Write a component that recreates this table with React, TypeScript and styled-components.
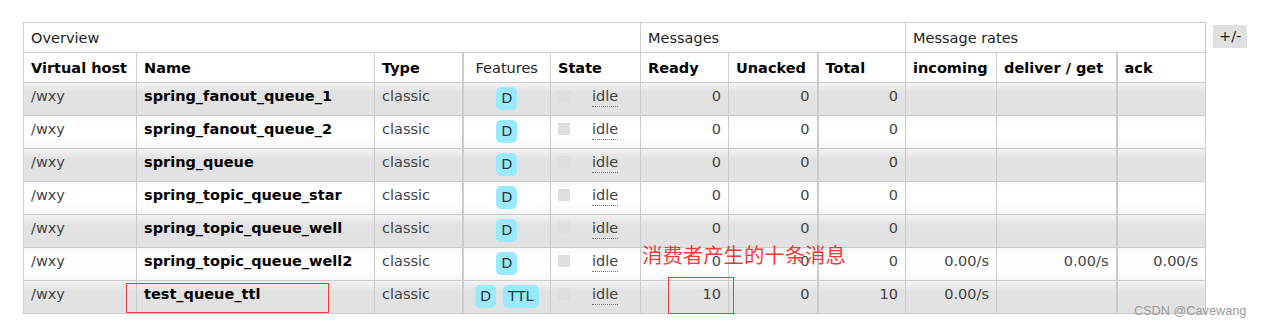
import React from "react";
import styled, { createGlobalStyle, css } from "styled-components";

const Global = createGlobalStyle`
  html, body { margin: 0; padding: 0; background: #fff; }
  body { font-family: "DejaVu Sans", Verdana, sans-serif; }
`;

const Page = styled.div`
  position: relative;
  width: 1263px;
  height: 329px;
  padding: 22px 0 0 23px;
  box-sizing: border-box;
  display: flex;
  align-items: flex-start;
  gap: 7px;
`;

const Table = styled.table`
  border-collapse: collapse;
  table-layout: fixed;
  width: 1183px;
  font-size: 14.5px;
  color: #444;
  border: 1px solid #ccc;
`;

const GroupCell = styled.th`
  height: 29px;
  padding: 0 7px;
  text-align: left;
  font-weight: normal;
  color: #222;
  vertical-align: middle;
  border-bottom: 1px solid #ccc;
  border-left: 1px solid #ccc;
  background: #fff;
`;

const HeadCell = styled.th<{ $normal?: boolean; $thick?: boolean }>`
  height: 29px;
  padding: 0 7px;
  text-align: ${(p) => (p.$normal ? "center" : "left")};
  font-weight: ${(p) => (p.$normal ? "normal" : "bold")};
  color: ${(p) => (p.$normal ? "#222" : "#000")};
  vertical-align: middle;
  white-space: nowrap;
  border-left: ${(p) => (p.$thick ? "2px" : "1px")} solid #ccc;
  border-bottom: 1px solid #ccc;
  background: #fff;
`;

const Row = styled.tr<{ $alt: boolean }>`
  ${(p) =>
    p.$alt
      ? css`
          background: linear-gradient(#f2f2f2 0%, #e2e2e2 30%, #e2e2e2 100%);
        `
      : css`
          background: linear-gradient(#fafafa 0%, #ffffff 35%, #ffffff 65%, #f6f6f6 100%);
        `}
`;

const Cell = styled.td<{ $align?: "left" | "right" | "center"; $thick?: boolean }>`
  height: 29px;
  padding: 3px 7px 0 7px;
  vertical-align: top;
  line-height: 21px;
  text-align: ${(p) => p.$align || "left"};
  white-space: nowrap;
  border-left: ${(p) => (p.$thick ? "2px" : "1px")} solid #ccc;
  border-bottom: 1px solid #ccc;
`;

const QueueName = styled.span`
  font-weight: bold;
  color: #000;
`;

const Badges = styled.span`
  display: inline-flex;
  gap: 7px;
  margin-top: 1px;
`;

const Badge = styled.span`
  display: inline-block;
  background: #99e9ff;
  color: #333;
  border-radius: 5px;
  padding: 0 5px;
  height: 23px;
  line-height: 23px;
`;

const StateWrap = styled.span`
  display: flex;
  align-items: flex-start;
`;

const StateBox = styled.span`
  width: 12px;
  height: 12px;
  margin-top: 4px;
  background: #dedede;
  flex: none;
`;

const Idle = styled.abbr`
  margin-left: 22px;
  text-decoration: none;
  border-bottom: 1px dotted #777;
  line-height: 20px;
  color: #444;
`;

const PlusMinus = styled.span`
  margin-top: 3px;
  background: #e0e0e0;
  color: #222;
  font-size: 14.5px;
  padding: 0 6px;
  height: 23px;
  line-height: 23px;
`;

const Annotation = styled.div`
  position: absolute;
  left: 642px;
  top: 242px;
  font-family: "Noto Sans CJK SC", sans-serif;
  font-size: 20.4px;
  line-height: 24px;
  color: #f03a3a;
`;

const RedBox = styled.div<{ $l: number; $t: number; $w: number; $h: number }>`
  position: absolute;
  left: ${(p) => p.$l}px;
  top: ${(p) => p.$t}px;
  width: ${(p) => p.$w}px;
  height: ${(p) => p.$h}px;
  border: 1px solid #ee3b3b;
  box-sizing: border-box;
  pointer-events: none;
`;

const Watermark = styled.div`
  position: absolute;
  left: 1134px;
  top: 304px;
  font-family: "Liberation Sans", Arial, sans-serif;
  font-size: 12.7px;
  color: #9a9a9a;
`;

type Q = {
  name: string;
  features: string[];
  ready: number;
  unacked: number;
  total: number;
  rates?: [string, string, string];
  incomingOnly?: string;
};

const queues: Q[] = [
  { name: "spring_fanout_queue_1", features: ["D"], ready: 0, unacked: 0, total: 0 },
  { name: "spring_fanout_queue_2", features: ["D"], ready: 0, unacked: 0, total: 0 },
  { name: "spring_queue", features: ["D"], ready: 0, unacked: 0, total: 0 },
  { name: "spring_topic_queue_star", features: ["D"], ready: 0, unacked: 0, total: 0 },
  { name: "spring_topic_queue_well", features: ["D"], ready: 0, unacked: 0, total: 0 },
  {
    name: "spring_topic_queue_well2",
    features: ["D"],
    ready: 0,
    unacked: 0,
    total: 0,
    rates: ["0.00/s", "0.00/s", "0.00/s"],
  },
  { name: "test_queue_ttl", features: ["D", "TTL"], ready: 10, unacked: 0, total: 10, incomingOnly: "0.00/s" },
];

const widths = [113, 238, 88, 88, 90, 88, 89, 88, 91, 120, 89];

export default function App() {
  return (
    <>
      <Global />
      <Page>
        <Table>
          <colgroup>
            {widths.map((w, i) => (
              <col key={i} style={{ width: w }} />
            ))}
          </colgroup>
          <thead>
            <tr>
              <GroupCell colSpan={5}>Overview</GroupCell>
              <GroupCell colSpan={3}>Messages</GroupCell>
              <GroupCell colSpan={3}>Message rates</GroupCell>
            </tr>
            <tr>
              <HeadCell>Virtual host</HeadCell>
              <HeadCell>Name</HeadCell>
              <HeadCell>Type</HeadCell>
              <HeadCell $normal $thick>Features</HeadCell>
              <HeadCell>State</HeadCell>
              <HeadCell>Ready</HeadCell>
              <HeadCell>Unacked</HeadCell>
              <HeadCell $thick>Total</HeadCell>
              <HeadCell>incoming</HeadCell>
              <HeadCell>deliver / get</HeadCell>
              <HeadCell $thick>ack</HeadCell>
            </tr>
          </thead>
          <tbody>
            {queues.map((q, i) => (
              <Row key={q.name} $alt={i % 2 === 0}>
                <Cell>/wxy</Cell>
                <Cell>
                  <QueueName>{q.name}</QueueName>
                </Cell>
                <Cell>classic</Cell>
                <Cell $align="center" $thick>
                  <Badges>
                    {q.features.map((f) => (
                      <Badge key={f}>{f}</Badge>
                    ))}
                  </Badges>
                </Cell>
                <Cell>
                  <StateWrap>
                    <StateBox />
                    <Idle title="idle">idle</Idle>
                  </StateWrap>
                </Cell>
                <Cell $align="right">{q.ready}</Cell>
                <Cell $align="right">{q.unacked}</Cell>
                <Cell $align="right" $thick>{q.total}</Cell>
                <Cell $align="right">{q.rates ? q.rates[0] : q.incomingOnly ?? ""}</Cell>
                <Cell $align="right">{q.rates ? q.rates[1] : ""}</Cell>
                <Cell $align="right" $thick>{q.rates ? q.rates[2] : ""}</Cell>
              </Row>
            ))}
          </tbody>
        </Table>
        <PlusMinus>+/-</PlusMinus>
        <Annotation>消费者产生的十条消息</Annotation>
        <RedBox $l={126} $t={283} $w={203} $h={30} />
        <RedBox $l={668} $t={277} $w={66} $h={37} />
        <Watermark>CSDN @Cavewang</Watermark>
      </Page>
    </>
  );
}
